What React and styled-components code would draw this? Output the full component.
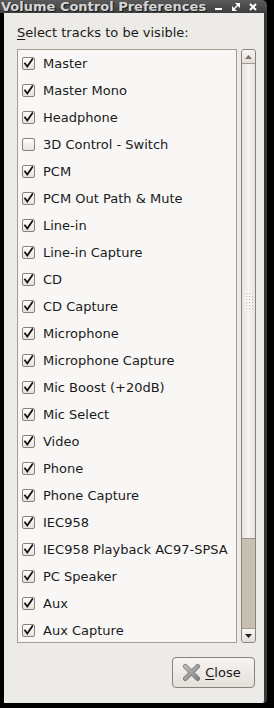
import React from "react";
import styled, { createGlobalStyle } from "styled-components";

const Global = createGlobalStyle`
  html, body { margin: 0; padding: 0; background: #000; }
  body { font-family: "DejaVu Sans", "Liberation Sans", sans-serif; }
`;

const Screen = styled.div`
  width: 274px;
  height: 708px;
  background: #000;
  overflow: hidden;
`;

const Frame = styled.div`
  width: 267px;
  height: 703px;
  display: flex;
  flex-direction: column;
`;

const TitleBar = styled.div`
  height: 13px;
  flex: none;
  background: linear-gradient(#5a5a5a, #3e3e3e);
  border-top-right-radius: 5px;
  display: flex;
  align-items: center;
  overflow: hidden;
  padding-left: 1px;
  padding-right: 10px;
`;

const Title = styled.div`
  flex: 1;
  font-family: "DejaVu Sans", sans-serif;
  font-weight: bold;
  font-size: 13px;
  line-height: 13px;
  color: #d4d4d4;
  text-shadow: 1px 1px 0 #1a1a1a;
  white-space: nowrap;
`;

const Controls = styled.div`
  display: flex;
  gap: 9px;
  align-items: center;
  height: 13px;
`;

const Body = styled.div`
  flex: 1;
  margin-left: 4px;
  background: #edebe7;
  border-right: 3px solid #3a3a3a;
  border-bottom-right-radius: 4px;
  display: flex;
  flex-direction: column;
  padding: 12px 8px 13px 13px;
`;

const Label = styled.div`
  font-size: 13px;
  line-height: 16px;
  color: #1a1a1a;
  margin-bottom: 8px;
  u { text-decoration: underline; text-underline-offset: 2px; }
`;

const ListArea = styled.div`
  display: flex;
  gap: 4px;
  height: 594px;
`;

const List = styled.div`
  width: 218px;
  border: 1px solid #a79c90;
  background: #f8f7f5;
  overflow: hidden;
  display: flex;
  flex-direction: column;
`;

const Row = styled.div`
  height: 27px;
  flex: none;
  display: flex;
  align-items: center;
  gap: 8px;
  padding-left: 4px;
  font-size: 13px;
  color: #1a1a1a;
  white-space: nowrap;
`;

const Box = styled.span`
  width: 13px;
  height: 13px;
  box-sizing: border-box;
  border: 1px solid #8a8178;
  border-radius: 2px;
  background: linear-gradient(#ffffff, #e6e2dd);
  display: flex;
  align-items: center;
  justify-content: center;
  flex: none;
`;

const Scrollbar = styled.div`
  width: 15px;
  display: flex;
  flex-direction: column;
  border: 1px solid #8c8378;
  border-radius: 3px;
  box-sizing: border-box;
  overflow: hidden;
  background: #c9c0b5;
`;

const ArrowBtn = styled.div`
  height: 13px;
  flex: none;
  background: linear-gradient(#f7f6f4, #e2ddd7);
  display: flex;
  align-items: center;
  justify-content: center;
  border-${(p) => (p.$down ? "top" : "bottom")}: 1px solid #a59a8e;
`;

const Thumb = styled.div`
  height: 474px;
  flex: none;
  background: linear-gradient(90deg, #e6e3df, #f6f5f3 50%, #e6e3df);
  border-bottom: 1px solid #9a8f83;
  border-left: 1px solid #8c8378;
  border-right: 1px solid #8c8378;
  margin: 0 -1px;
  display: flex;
  align-items: center;
  justify-content: center;
`;

const Trough = styled.div`
  flex: 1;
  background: #c8bfb3;
`;

const Footer = styled.div`
  display: flex;
  justify-content: flex-end;
  margin-top: 14px;
  padding-right: 1px;
`;

const Button = styled.div`
  width: 83px;
  height: 31px;
  box-sizing: border-box;
  border: 1px solid #8a8277;
  border-radius: 4px;
  background: linear-gradient(#f6f4f2, #e4e0db);
  display: flex;
  align-items: center;
  justify-content: center;
  gap: 4px;
  font-size: 13px;
  color: #1a1a1a;
  padding-right: 4px;
  u { text-decoration: underline; text-underline-offset: 2px; }
`;

const tracks = [
  ["Master", true],
  ["Master Mono", true],
  ["Headphone", true],
  ["3D Control - Switch", false],
  ["PCM", true],
  ["PCM Out Path & Mute", true],
  ["Line-in", true],
  ["Line-in Capture", true],
  ["CD", true],
  ["CD Capture", true],
  ["Microphone", true],
  ["Microphone Capture", true],
  ["Mic Boost (+20dB)", true],
  ["Mic Select", true],
  ["Video", true],
  ["Phone", true],
  ["Phone Capture", true],
  ["IEC958", true],
  ["IEC958 Playback AC97-SPSA", true],
  ["PC Speaker", true],
  ["Aux", true],
  ["Aux Capture", true],
];

const Check = () => (
  <svg width="11" height="11" viewBox="0 0 11 11">
    <path d="M2 5.5 L4.3 8.5 L9.3 1.3" fill="none" stroke="#111" strokeWidth="1.8" strokeLinecap="square" strokeLinejoin="miter" />
  </svg>
);

const Grip = () => (
  <svg width="8" height="18" viewBox="0 0 8 18">
    {Array.from({ length: 6 }).flatMap((_, r) =>
      [0, 3, 6].map((c) => (
        <g key={`${r}-${c}`}>
          <rect x={c} y={r * 3} width="1.5" height="1.5" fill="#fff" />
          <rect x={c + 1} y={r * 3 + 1} width="1" height="1" fill="#bdb6ad" />
        </g>
      ))
    )}
  </svg>
);

export default function App() {
  return (
    <Screen>
      <Global />
      <Frame>
        <TitleBar>
          <Title>Volume Control Preferences</Title>
          <Controls>
            <svg width="8" height="8" viewBox="0 0 8 8">
              <rect x="0" y="5" width="7" height="2" fill="#fff" />
            </svg>
            <svg width="8" height="8" viewBox="0 0 8 8">
              <path d="M4 0 H8 V4 Z M0 4 V8 H4 Z M2 6 L6 2" fill="#fff" stroke="#fff" strokeWidth="1.4" />
            </svg>
            <svg width="8" height="8" viewBox="0 0 8 8">
              <path d="M1 1 L7 7 M7 1 L1 7" stroke="#fff" strokeWidth="2" />
            </svg>
          </Controls>
        </TitleBar>
        <Body>
          <Label>
            <u>S</u>elect tracks to be visible:
          </Label>
          <ListArea>
            <List>
              {tracks.map(([name, on]) => (
                <Row key={name}>
                  <Box>{on && <Check />}</Box>
                  <span>{name}</span>
                </Row>
              ))}
            </List>
            <Scrollbar>
              <ArrowBtn>
                <svg width="7" height="4" viewBox="0 0 7 4">
                  <path d="M0 4 L3.5 0 L7 4 Z" fill="#7d746a" />
                </svg>
              </ArrowBtn>
              <Thumb>
                <Grip />
              </Thumb>
              <Trough />
              <ArrowBtn $down>
                <svg width="7" height="4" viewBox="0 0 7 4">
                  <path d="M0 0 L7 0 L3.5 4 Z" fill="#222" />
                </svg>
              </ArrowBtn>
            </Scrollbar>
          </ListArea>
          <Footer>
            <Button>
              <svg width="19" height="19" viewBox="0 0 20 20">
                <defs>
                  <linearGradient id="xg" x1="0" y1="0" x2="1" y2="1">
                    <stop offset="0" stopColor="#bdbdbd" />
                    <stop offset="1" stopColor="#858585" />
                  </linearGradient>
                </defs>
                <path d="M3.5 3.5 L16.5 16.5 M16.5 3.5 L3.5 16.5" stroke="#777" strokeWidth="5" strokeLinecap="round" />
                <path d="M3.5 3.5 L16.5 16.5 M16.5 3.5 L3.5 16.5" stroke="url(#xg)" strokeWidth="3.4" strokeLinecap="round" />
              </svg>
              <span>
                <u>C</u>lose
              </span>
            </Button>
          </Footer>
        </Body>
      </Frame>
    </Screen>
  );
}
